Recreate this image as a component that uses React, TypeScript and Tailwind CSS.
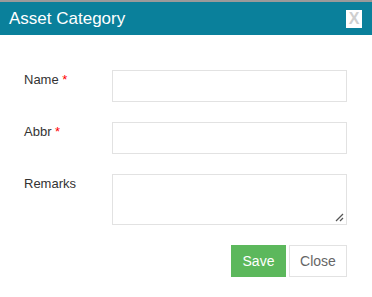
import React from "react";

export default function App() {
  return (
    <div className="w-[372px] h-[297px] bg-white" style={{ fontFamily: '"Liberation Sans", Arial, sans-serif' }}>
      <div className="h-[2px] bg-[#9a9a9a]" />
      <div className="h-[33px] bg-[#0a809b] flex items-center justify-between pl-[9px] pr-[10px]">
        <span className="text-white text-[17px] leading-none">Asset Category</span>
        <div className="w-[16px] h-[18px] bg-white flex items-center justify-center text-[#cfcfcf] text-[16px] font-bold leading-none">X</div>
      </div>
      <div className="pt-[35px] pl-[24px] pr-[25px] flex flex-col gap-[20px] text-[13px] text-[#333]">
        <div className="flex">
          <label className="w-[88px] pt-[0px]">Name <span className="text-[#f00]">*</span></label>
          <div className="w-[236px] h-[32px] border border-[#e2e2e2]" />
        </div>
        <div className="flex">
          <label className="w-[88px] pt-[0px]">Abbr <span className="text-[#f00]">*</span></label>
          <div className="w-[236px] h-[32px] border border-[#e2e2e2]" />
        </div>
        <div className="flex">
          <label className="w-[88px] pt-[0px]">Remarks</label>
          <div className="w-[236px] h-[51px] border border-[#e2e2e2] relative">
            <svg className="absolute right-[2px] bottom-[2px]" width="10" height="10" viewBox="0 0 10 10">
              <line x1="2" y1="9" x2="9" y2="2" stroke="#555" strokeWidth="1.2" />
              <line x1="6" y1="9" x2="9" y2="6" stroke="#555" strokeWidth="1.2" />
            </svg>
          </div>
        </div>
        <div className="flex justify-end gap-[3px]">
          <button className="w-[55px] h-[32px] bg-[#5cb85c] text-white text-[14px]">Save</button>
          <button className="w-[58px] h-[32px] border border-[#e2e2e2] text-[#666] text-[14px]">Close</button>
        </div>
      </div>
    </div>
  );
}
